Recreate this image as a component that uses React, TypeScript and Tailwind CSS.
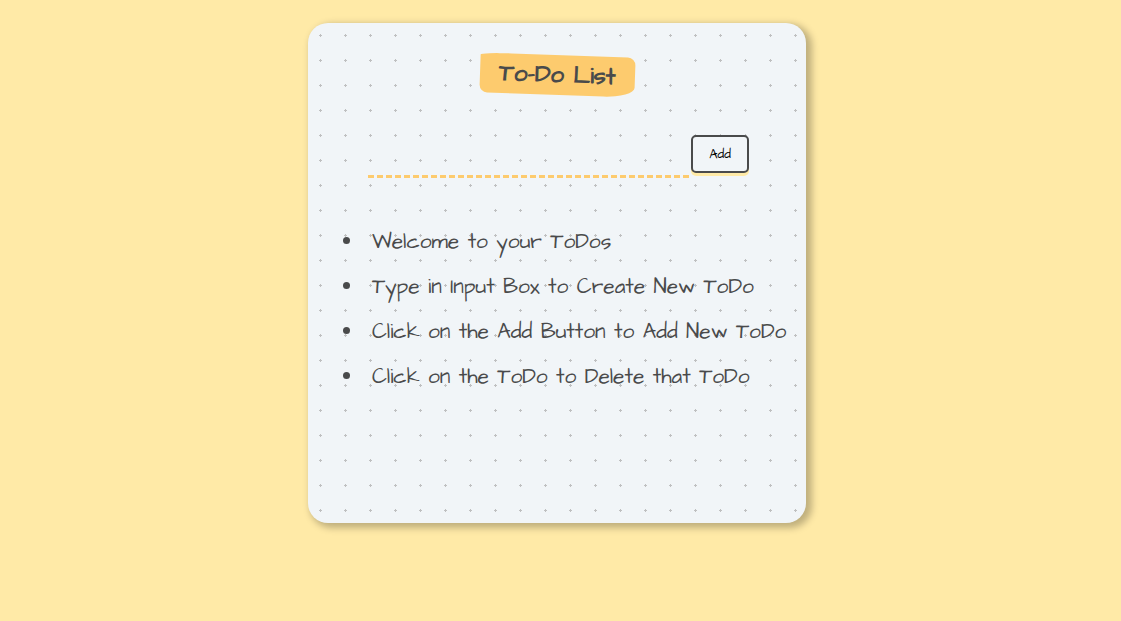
import { useState } from "react";
import type { FormEvent } from "react";

const initialTodos = [
  "Welcome to your ToDos",
  "Type in Input Box to Create New ToDo",
  "Click on the Add Button to Add New ToDo",
  "Click on the ToDo to Delete that ToDo",
];

export default function App() {
  const [todos, setTodos] = useState<string[]>(initialTodos);
  const [draft, setDraft] = useState("");

  const addTodo = (event: FormEvent) => {
    event.preventDefault();
    if (!draft.trim()) return;
    setTodos([...todos, draft.trim()]);
    setDraft("");
  };

  return (
    <div className="flex min-h-screen items-start justify-center bg-[#ffeaa7] pt-[23px] pr-[7px] pb-6 font-['Architects_Daughter','Lato',sans-serif] text-[#494a4b]">
      <main className="min-h-[500px] w-full max-w-[498px] rounded-[20px] bg-[#f1f5f8] bg-[radial-gradient(#bfc0c1_7.2%,transparent_0)] bg-[length:25px_25px] shadow-[4px_3px_7px_2px_#00000040]">
        <div className="flex justify-center pt-8">
          <h1 className="rotate-2 rounded-[20%_5%_20%_5%/5%_20%_25%_20%] bg-[#fdcb6e] px-[19px] py-1 text-2xl leading-8 font-bold">
            To-Do List
          </h1>
        </div>
        <form onSubmit={addTodo} className="mt-10 flex items-start pr-[57px] pl-[60px]">
          <input
            type="text"
            aria-label="New to-do"
            value={draft}
            onChange={(event) => setDraft(event.target.value)}
            className="mr-0.5 h-[43px] min-w-0 flex-1 border-b-3 border-dashed border-[#fdcb6e] bg-transparent px-1 text-xl outline-none"
          />
          <button
            type="submit"
            className="h-[38px] w-[58px] rounded-[5px] border-2 border-[#494a4b] bg-[#f1f5f8] pt-px text-[13px] text-black shadow-[0_3px_0_#ffeaa7]"
          >
            Add
          </button>
        </form>
        <ul className="mt-[41px] list-disc pr-4 pl-14">
          {todos.map((todo, index) => (
            <li
              key={index}
              onClick={() => setTodos(todos.filter((_, i) => i !== index))}
              className="cursor-pointer pl-2 text-[21px] leading-[45px]"
            >
              {todo}
            </li>
          ))}
        </ul>
      </main>
    </div>
  );
}
